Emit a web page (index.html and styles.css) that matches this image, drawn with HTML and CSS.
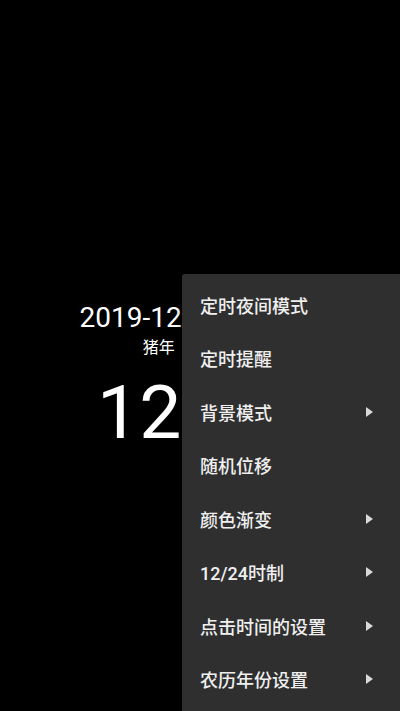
FILE: index.html
```html
<!DOCTYPE html>
<html lang="zh">
<head>
<meta charset="utf-8">
<title>Clock</title>
<link rel="stylesheet" href="styles.css">
</head>
<body>
<main class="screen">
  <section class="clock">
    <div class="date">2019-12</div>
    <div class="lunar">猪年</div>
    <div class="time">12</div>
  </section>
  <nav class="menu">
    <div class="item"><span>定时夜间模式</span></div>
    <div class="item"><span>定时提醒</span></div>
    <div class="item"><span>背景模式</span><i class="arrow"></i></div>
    <div class="item"><span>随机位移</span></div>
    <div class="item"><span>颜色渐变</span><i class="arrow"></i></div>
    <div class="item"><span>12/24时制</span><i class="arrow"></i></div>
    <div class="item"><span>点击时间的设置</span><i class="arrow"></i></div>
    <div class="item"><span>农历年份设置</span><i class="arrow"></i></div>
  </nav>
</main>
</body>
</html>
```
FILE: styles.css
```css
html, body {
  margin: 0;
  padding: 0;
  background: #000;
}
body {
  width: 400px;
  height: 711px;
  overflow: hidden;
  font-family: Roboto, "Noto Sans CJK SC", sans-serif;
  color: #fff;
}
.screen {
  position: relative;
  width: 400px;
  height: 711px;
  overflow: hidden;
}
.clock {
  width: 182px;
  display: flex;
  flex-direction: column;
  align-items: flex-start;
  padding-top: 303.6px;
  white-space: nowrap;
}
.date {
  font-size: 28px;
  line-height: 28px;
  margin-left: 79.5px;
}
.lunar {
  font-size: 16px;
  line-height: 16px;
  margin-left: 142.8px;
  margin-top: 8.4px;
}
.time {
  font-size: 75px;
  line-height: 75px;
  font-weight: 400;
  margin-left: 97px;
  margin-top: 19px;
}
.menu {
  position: absolute;
  left: 182px;
  top: 274px;
  right: 0;
  bottom: 0;
  background: #2f2f2f;
  border-top-left-radius: 3px;
  padding-top: 4px;
  box-shadow: 0 0 6px rgba(0, 0, 0, 0.6);
  display: flex;
  flex-direction: column;
}
.item {
  height: 53.5px;
  display: flex;
  align-items: center;
  justify-content: space-between;
  padding: 0 27px 0 18px;
  font-size: 18px;
  font-weight: 500;
  color: #efefef;
}
.arrow {
  width: 0;
  height: 0;
  border-top: 5.5px solid transparent;
  border-bottom: 5.5px solid transparent;
  border-left: 7px solid #d9d9d9;
}
```
